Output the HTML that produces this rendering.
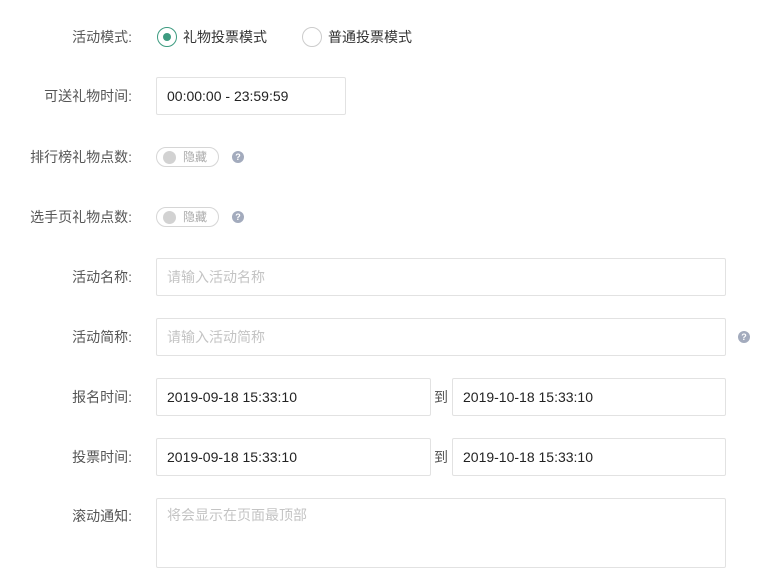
<!DOCTYPE html>
<html><head><meta charset="utf-8"><style>
body{margin:0;width:771px;height:582px;background:#fff;font-family:"Liberation Sans","Noto Sans CJK SC",sans-serif;font-size:14px;color:#333;position:relative;overflow:hidden}
.a{position:absolute}
.lbl{position:absolute;right:639px;width:140px;text-align:right;color:#555;line-height:16px}
.in{position:absolute;border:1px solid #e2e2e2;border-radius:2px;box-sizing:border-box;line-height:36px;padding-left:10px;color:#222}
.ph{color:#c4c4c4}
.q{position:absolute;width:12px;height:12px;border-radius:50%;background:#a3abbd;color:#fff;font-size:9px;font-weight:bold;line-height:12px;text-align:center}
.sw{position:absolute;left:156px;width:63px;height:20px;border:1px solid #d6d6d6;border-radius:11px;box-sizing:border-box}
.sw i{position:absolute;left:6px;top:3px;width:13px;height:13px;border-radius:50%;background:#d2d2d2}
.sw span{position:absolute;left:26px;top:2px;font-size:12px;color:#aaa;line-height:14px}
</style></head><body>
<div class="lbl" style="top:29px">活动模式:</div>
<div class="a" style="left:157px;top:27px;width:20px;height:20px;border:1px solid #3d9b80;border-radius:50%;box-sizing:border-box"><div class="a" style="left:5px;top:5px;width:8px;height:8px;border-radius:50%;background:#3d9b80"></div></div>
<div class="a" style="left:183px;top:29px;line-height:16px">礼物投票模式</div>
<div class="a" style="left:302px;top:27px;width:20px;height:20px;border:1px solid #ccc;border-radius:50%;box-sizing:border-box"></div>
<div class="a" style="left:328px;top:29px;line-height:16px">普通投票模式</div>

<div class="lbl" style="top:88px">可送礼物时间:</div>
<div class="in" style="left:156px;top:77px;width:190px;height:38px">00:00:00 - 23:59:59</div>

<div class="lbl" style="top:149px">排行榜礼物点数:</div>
<div class="sw" style="top:147px"><i></i><span>隐藏</span></div>
<div class="q" style="left:232px;top:151px">?</div>

<div class="lbl" style="top:209px">选手页礼物点数:</div>
<div class="sw" style="top:207px"><i></i><span>隐藏</span></div>
<div class="q" style="left:232px;top:211px">?</div>

<div class="lbl" style="top:269px">活动名称:</div>
<div class="in ph" style="left:156px;top:258px;width:570px;height:38px">请输入活动名称</div>

<div class="lbl" style="top:329px">活动简称:</div>
<div class="in ph" style="left:156px;top:318px;width:570px;height:38px">请输入活动简称</div>
<div class="q" style="left:738px;top:331px">?</div>

<div class="lbl" style="top:389px">报名时间:</div>
<div class="in" style="left:156px;top:378px;width:275px;height:38px">2019-09-18 15:33:10</div>
<div class="a" style="left:434px;top:389px;color:#555;line-height:16px">到</div>
<div class="in" style="left:452px;top:378px;width:274px;height:38px">2019-10-18 15:33:10</div>

<div class="lbl" style="top:449px">投票时间:</div>
<div class="in" style="left:156px;top:438px;width:275px;height:38px">2019-09-18 15:33:10</div>
<div class="a" style="left:434px;top:449px;color:#555;line-height:16px">到</div>
<div class="in" style="left:452px;top:438px;width:274px;height:38px">2019-10-18 15:33:10</div>

<div class="lbl" style="top:508px">滚动通知:</div>
<div class="in ph" style="left:156px;top:498px;width:570px;height:70px;line-height:16px;padding-top:8px">将会显示在页面最顶部</div>
</body></html>
